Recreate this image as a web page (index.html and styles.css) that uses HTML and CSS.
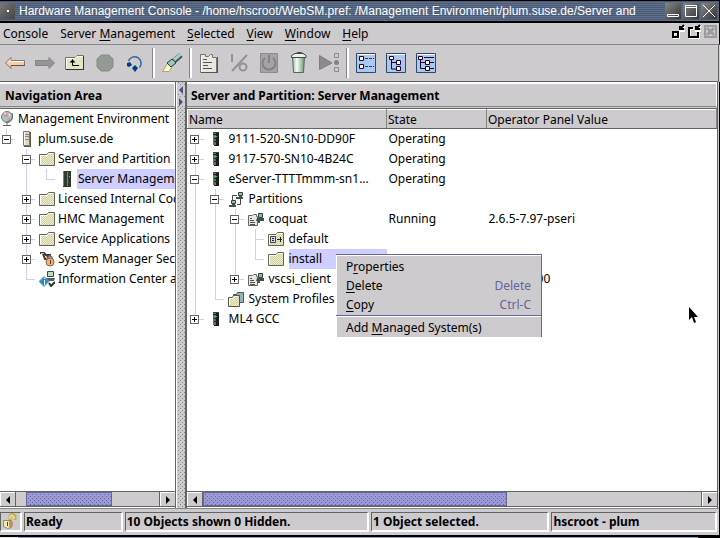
FILE: index.html
```html
<!DOCTYPE html>
<html lang="en">
<head>
<meta charset="utf-8">
<title>Hardware Management Console</title>
<link rel="stylesheet" href="styles.css">
</head>
<body>
<svg class="sprite" aria-hidden="true">
  <defs>
    <pattern id="dither" width="2" height="2" patternUnits="userSpaceOnUse"><path fill="#eeeecc" d="M0 0h2v2H0z"/><path fill="#cfcfa2" d="M0 0h1v1H0zM1 1h1v1H1z"/></pattern>
    <pattern id="bluedots" width="2" height="2" patternUnits="userSpaceOnUse"><path fill="#9ccaff" d="M0 0h2v2H0z"/><path fill="#b5c8e4" d="M0 0h1v1H0zM1 1h1v1H1z"/></pattern>
    <linearGradient id="can"><stop offset="0" stop-color="#9eb8a3"/><stop offset=".35" stop-color="#f2fff2"/><stop offset=".65" stop-color="#b6d0b8"/><stop offset="1" stop-color="#71927a"/></linearGradient>
  </defs>
  <symbol id="folder" viewBox="0 0 16 14">
    <path fill="url(#dither)" d="M1 3h7l2-2h5v12H1z"/>
    <path stroke="#63655a" d="M.5 13.500V2.500H8L9.500.5h6v13z"/>
    <path stroke="#fff" d="M1.500 12V3.500H8L10 1.500h4"/>
  </symbol>
  <symbol id="server" viewBox="0 0 8 14">
    <path fill="#3c403c" d="M1 0h6v13H1z"/><path fill="#686c68" d="M1 1h3v12H1z"/><path fill="#181c18" d="M4 1h3v12H4zM2 13h5v1H2z"/>
    <path stroke="#24ce52" d="M2 4.500h3"/><path stroke="#222" d="M1 2.500h6M2 6.500h5M2 9.500h5"/>
  </symbol>
  <symbol id="screen" viewBox="0 0 7 7">
    <path fill="#8fc3b6" stroke="#34443d" d="M2.500.5h4v3h-4z"/><path fill="#475248" d="M0 5h7v2H0zM3 4h3v1H3z"/>
  </symbol>
  <symbol id="partition" viewBox="0 0 16 13">
    <path fill="#e6e7e2" stroke="#656862" d="M.5 12.500V2.500h4l1-1h3v2h1v9z"/>
    <path stroke="#4e524d" d="M2 5.500h2M2 7.500h4M2 9.500h5M2 11.500h5"/><path fill="#415149" d="M9 5h7v3h-4v2h-2V8H8z"/>
    <path fill="#93b7b1" stroke="#34443d" d="M10.500.5h4v4h-4z"/>
  </symbol>
</svg>

<header class="titlebar">
  <button class="sysmenu" aria-label="Window menu"></button>
  <h1>Hardware Management Console - /home/hscroot/WebSM.pref: /Management Environment/plum.suse.de/Server and</h1>
  <div class="wincontrols">
    <button aria-label="Minimize"><svg viewBox="0 0 16 16"><path d="M2.500 11.500h11v2h-11z"/></svg></button>
    <button aria-label="Maximize"><svg viewBox="0 0 16 16"><path d="M2.500 2.500h11v11h-11zM2 4.500h11"/></svg></button>
    <button aria-label="Close"><svg viewBox="0 0 16 16"><path d="M2 2l12 12M14 2L2 14"/></svg></button>
  </div>
</header>

<nav class="menubar">
  <button>Co<u>n</u>sole</button>
  <button>Server <u>M</u>anagement</button>
  <button><u>S</u>elected</button>
  <button><u>V</u>iew</button>
  <button><u>W</u>indow</button>
  <button><u>H</u>elp</button>
  <div class="framecontrols">
    <button aria-label="Iconify"><svg viewBox="0 0 15 15"><path class="lo" d="M3 9h5v5H3zM14 2l-4 4M9 3v4h5"/><path class="hi" d="M2 8h5v5H2zM13 1L9 5M9 2v3h4"/></svg></button>
    <button aria-label="Restore"><svg viewBox="0 0 15 15"><path class="lo" d="M7 5H3v9h9v-5M14 2l-4 4M9 3v4h5"/><path class="hi" d="M6 4H2v9h9V8M13 1L9 5M9 2v3h4"/></svg></button>
    <button aria-label="Close view"><svg viewBox="0 0 15 15"><path fill="#cecbce" stroke="#9c9a9c" stroke-width="2" d="M2 2h11v11H2z"/><path stroke="#9c9a9c" stroke-width="3" d="M4 4l7 7M11 4l-7 7"/></svg></button>
  </div>
</nav>

<div class="toolbar" role="toolbar">
  <button aria-label="Back"><svg viewBox="0 0 30 30"><path fill="#f9cda9" stroke="#8f7464" d="M5.500 15L11 9.500v3h13.500v5H11v3z"/><path stroke="#fff" d="M11 13.500h13M8 14.500l3-3"/><path stroke="#5f5350" d="M11 17.500h14"/></svg></button>
  <button aria-label="Forward"><svg viewBox="0 0 30 30"><path fill="#949694" stroke="#848684" d="M24.500 15L19 9.500v3H5.500v5H19v3z"/></svg></button>
  <button aria-label="Up"><svg viewBox="0 0 30 30"><path fill="#e7e4c5" stroke="#74736a" d="M5.500 21.500v-12H15l2-2h6.500v14z"/><path stroke="#fff" d="M6.500 20V10.500H15l2-2h6"/><path stroke="#333" d="M6 21.500h18M23.500 8v13"/><path stroke="#000" d="M12.500 11.500v6H19"/><path fill="#000" d="M9.500 14.500l3-3 3 3z"/></svg></button>
  <button aria-label="Stop"><svg viewBox="0 0 30 30"><path fill="#949a94" stroke="#868b86" d="M11 7h8l4 4v8l-4 4h-8l-4-4v-8z"/></svg></button>
  <button aria-label="Reload"><svg viewBox="0 0 30 30"><path stroke="#31659c" stroke-width="1.500" d="M8.500 13a6.500 6.500 0 1 1 11 6.500"/><path fill="#003c84" d="M7 15l3-1 2 3-3 2-2-1zM15 17l3 3-3 4-3-4z"/></svg></button>
  <span class="sep"></span>
  <button aria-label="Highlight"><svg viewBox="0 0 30 30"><path fill="#fffbd0" stroke="#a8a56b" d="M5.500 23.500l5-8 4 4-2 4z"/><path stroke="#fff6a0" d="M8 22l4-5"/><path fill="#9fc3bd" stroke="#26383d" d="M10 15l5-4 4 4-5 4z"/><path stroke="#394d56" stroke-width="5" d="M17 13l7-6"/><path stroke="#a9cbd0" stroke-width="3" d="M17 12l7-6"/></svg></button>
  <span class="sep"></span>
  <button aria-label="Properties"><svg viewBox="0 0 30 30"><path fill="#e7e8e2" stroke="#74766f" d="M6.500 24.500v-18h5v2h3l2-2h2v3h4v15z"/><path stroke="#fff" d="M7.500 24V9"/><path stroke="#555" d="M23.500 9v16M7 24.500h17M9 11.500h4M9 14.500h9M9 17.500h5M9 20.500h9"/></svg></button>
  <button aria-label="Percent"><svg viewBox="0 0 30 30"><path stroke="#949294" stroke-width="2" d="M8 6v8M23 7L8 23"/><circle cx="19" cy="19" r="3.500" stroke="#949294" stroke-width="2"/></svg></button>
  <button aria-label="Power"><svg viewBox="0 0 30 30"><path fill="#a5a3a5" stroke="#8c8a8c" d="M6.500 5.500h17v19h-17z"/><path stroke="#848284" stroke-width="2" d="M11 10a6.500 6.500 0 1 0 8 0M15 7v8"/></svg></button>
  <button aria-label="Delete"><svg viewBox="0 0 30 30"><path fill="url(#can)" stroke="#52695a" d="M8.500 8.500h12l-1 16h-10z"/><path fill="#ebf5e7" stroke="#3b493f" d="M7.500 9.500v-2L11 5.500h8l3 2v2zM12 5.500l2-1h3l2 1"/></svg></button>
  <button aria-label="Run task"><svg viewBox="0 0 30 30"><path fill="#8c8a8c" stroke="#7f7d7f" d="M5.500 7.500v14L18 15z"/><path fill="#cecbce" stroke="#8c8a8c" d="M20.500 5.500h4v4h-4zM20.500 19.500h4v4h-4z"/><circle cx="22.500" cy="14.500" r="2.500" fill="#848284"/></svg></button>
  <span class="sep"></span>
  <button aria-label="Icon view"><svg viewBox="0 0 30 30"><path fill="url(#bluedots)" stroke="#294968" d="M5.500 5.500h19v19h-19z"/><path stroke="#fff" d="M6 6.500h18"/><path fill="#fff" stroke="#210031" d="M8.500 8.500h4v4h-4zM8.500 16.500h4v4h-4z"/><path stroke="#42306b" stroke-dasharray="3 1" d="M14 10.500h9M14 18.500h9"/></svg></button>
  <button aria-label="Tree view"><svg viewBox="0 0 30 30"><path fill="url(#bluedots)" stroke="#294968" d="M5.500 5.500h19v19h-19z"/><path stroke="#fff" d="M6 6.500h18"/><path stroke="#210031" d="M10.500 12v9H16M10 14.500h6"/><path fill="#fff" stroke="#210031" d="M8.500 8.500h4v3h-4zM15.500 12.500h4v4h-4zM15.500 18.500h4v4h-4z"/></svg></button>
  <button aria-label="Tree details view"><svg viewBox="0 0 30 30"><path fill="url(#bluedots)" stroke="#294968" d="M5.500 5.500h19v19h-19z"/><path stroke="#fff" d="M6 6.500h18"/><path stroke="#210031" d="M9.500 12v8.500H23M10 14.500h13M13 9.500h10"/><path fill="#fff" stroke="#210031" d="M7.500 8.500h4v3h-4zM14.500 12.500h4v4h-4zM14.500 18.500h4v4h-4z"/></svg></button>
</div>

<main class="workspace">
  <section class="pane navpane">
    <h2>Navigation Area</h2>
    <div class="view">
      <ul class="tree">
        <li><span class="icon"><svg width="14" height="16" viewBox="0 0 14 16"><circle cx="7" cy="6" r="5.500" fill="#a9c6d6" stroke="#767c7c"/><path fill="#d89c89" d="M3 3l4-1 2 2-3 3-2-1zM7 8l3-2v4l-2 1z"/><path stroke="#fff" d="M4 2l2 1M9 3l1 2"/><path stroke="#666" d="M12 2c2 5-2 9-6 9M7 12v2M3 14.500h8"/></svg></span><span class="label">Management Environment</span></li>
        <li><i class="g end"><button class="box" aria-label="Collapse"></button></i><span class="icon"><svg width="8" height="16" viewBox="0 0 8 16"><path fill="#ddd9bf" stroke="#7a7869" d="M.5.5h6v14h-6z"/><path stroke="#57554b" d="M7.500 1v15M1 15.500h7"/><path stroke="#8d8a77" d="M2 3.500h4M2 5.500h4M2 8.500h4"/><path stroke="#fff" d="M1.500 1v13"/></svg></span><span class="label">plum.suse.de</span></li>
        <li><i class="g"></i><i class="g tee"><button class="box" aria-label="Collapse"></button></i><span class="icon"><svg class="fold"><use href="#folder"/></svg></span><span class="label">Server and Partition</span></li>
        <li><i class="g"></i><i class="g bar"></i><i class="g end"></i><span class="icon"><svg width="8" height="16" viewBox="0 0 8 16"><path fill="#313831" d="M0 0h8v16H0z"/><path stroke="#7b857b" d="M.5 0v15"/><path stroke="#b57820" d="M4.500 1v14"/><path stroke="#20e080" d="M6 5.500h1"/></svg></span><span class="label selected">Server Management</span></li>
        <li><i class="g"></i><i class="g tee"><button class="box plus" aria-label="Expand"></button></i><span class="icon"><svg class="fold"><use href="#folder"/></svg></span><span class="label">Licensed Internal Code</span></li>
        <li><i class="g"></i><i class="g tee"><button class="box plus" aria-label="Expand"></button></i><span class="icon"><svg class="fold"><use href="#folder"/></svg></span><span class="label">HMC Management</span></li>
        <li><i class="g"></i><i class="g tee"><button class="box plus" aria-label="Expand"></button></i><span class="icon"><svg class="fold"><use href="#folder"/></svg></span><span class="label">Service Applications</span></li>
        <li><i class="g"></i><i class="g tee"><button class="box plus" aria-label="Expand"></button></i><span class="icon"><svg width="16" height="16" viewBox="0 0 16 16"><path stroke="#433b37" stroke-width="2" d="M1 2h4l2 2h5M4 3l2 5h2M8 4l1 3"/><path stroke="#d7af85" d="M2 2.500h3M7 5l1 3"/><path stroke="#777" stroke-width="2" d="M9 9V7c1-3 4-2 4 1"/><circle cx="11" cy="11" r="4" fill="#efb277" stroke="#916044"/><path stroke="#553b42" d="M11.500 9v4"/></svg></span><span class="label">System Manager Security</span></li>
        <li><i class="g"></i><i class="g end"></i><span class="icon"><svg width="16" height="16" viewBox="0 0 16 16"><path fill="#b9dcc7" stroke="#394948" d="M8.500.5h6v5h-6z"/><path fill="#566158" d="M7 7h9l-1 3H7z"/><path fill="#2688b6" stroke="#64b5d4" d="M5 5.500l5 5-5 5-5-5z"/><path stroke="#fff" d="M5.500 7v1M5.500 9v5"/><path stroke="#26352e" stroke-width="2" d="M10 12l2 3 4-4"/></svg></span><span class="label">Information Center and Setup</span></li>
      </ul>
      <div class="scrollbar nav">
        <button class="arrow left" aria-label="Scroll left"></button>
        <div class="track"><div class="thumb"></div></div>
        <button class="arrow right" aria-label="Scroll right"></button>
      </div>
    </div>
  </section>

  <div class="splitter"><button class="arrow left" aria-label="Collapse left"></button><button class="arrow right" aria-label="Expand right"></button></div>

  <section class="pane content">
    <h2>Server and Partition: Server Management</h2>
    <div class="view">
      <div class="tablewrap">
      <table>
        <colgroup><col class="name"><col class="state"><col></colgroup>
        <thead><tr><th>Name</th><th>State</th><th>Operator Panel Value</th></tr></thead>
        <tbody>
          <tr><td><div class="node"><i class="g first"><button class="box plus" aria-label="Expand"></button></i><span class="icon"><svg class="srv"><use href="#server"/></svg></span><span>9111-520-SN10-DD90F</span></div></td><td>Operating</td><td></td></tr>
          <tr><td><div class="node"><i class="g tee"><button class="box plus" aria-label="Expand"></button></i><span class="icon"><svg class="srv"><use href="#server"/></svg></span><span>9117-570-SN10-4B24C</span></div></td><td>Operating</td><td></td></tr>
          <tr><td><div class="node"><i class="g tee"><button class="box" aria-label="Collapse"></button></i><span class="icon"><svg class="srv"><use href="#server"/></svg></span><span>eServer-TTTTmmm-sn1...</span></div></td><td>Operating</td><td></td></tr>
          <tr><td><div class="node"><i class="g bar"></i><i class="g tee"><button class="box" aria-label="Collapse"></button></i><span class="icon"><svg width="15" height="15" viewBox="0 0 15 15"><path stroke="#454945" d="M3.500 8V3.500H8M8 12.500h3.500V7"/><use href="#screen" x="7" width="7" height="7"/><use href="#screen" y="8" width="7" height="7"/></svg></span><span>Partitions</span></div></td><td></td><td></td></tr>
          <tr><td><div class="node"><i class="g bar"></i><i class="g bar"></i><i class="g tee"><button class="box" aria-label="Collapse"></button></i><span class="icon"><svg class="part"><use href="#partition"/></svg></span><span>coquat</span></div></td><td>Running</td><td>2.6.5-7.97-pseri</td></tr>
          <tr><td><div class="node"><i class="g bar"></i><i class="g bar"></i><i class="g bar"></i><i class="g tee"></i><span class="icon"><svg class="fold" viewBox="0 0 16 14"><use href="#folder"/><path fill="#d8d6ee" stroke="#454545" d="M2.500 4.500h5v6h-5z"/><path stroke="#222" d="M4 6.500h2M4 8.500h2M9 7.500h5M12.500 5v5"/></svg></span><span>default</span></div></td><td></td><td></td></tr>
          <tr><td><div class="node"><i class="g bar"></i><i class="g bar"></i><i class="g bar"></i><i class="g end"></i><span class="icon"><svg class="fold"><use href="#folder"/></svg></span><span class="picked">install</span></div></td><td></td><td></td></tr>
          <tr><td><div class="node"><i class="g bar"></i><i class="g bar"></i><i class="g end"><button class="box plus" aria-label="Expand"></button></i><span class="icon"><svg class="part"><use href="#partition"/></svg></span><span>vscsi_client</span></div></td><td></td><td>000000000</td></tr>
          <tr><td><div class="node"><i class="g bar"></i><i class="g end"></i><span class="icon"><svg width="16" height="15" viewBox="0 0 16 15"><path fill="#91b3b3" stroke="#465a5a" d="M5.500 10.500v-8h3l1-2h6v10z"/><path fill="url(#dither)" stroke="#555447" d="M.5 14.500v-9h4l1-2h6v11z"/><path stroke="#fff" d="M1.500 13V6.500H5l1-2h4"/></svg></span><span>System Profiles</span></div></td><td></td><td></td></tr>
          <tr><td><div class="node"><i class="g end"><button class="box plus" aria-label="Expand"></button></i><span class="icon"><svg class="srv"><use href="#server"/></svg></span><span>ML4 GCC</span></div></td><td></td><td></td></tr>
        </tbody>
      </table>
      </div>
      <div class="scrollbar main">
        <button class="arrow left" aria-label="Scroll left"></button>
        <div class="track"><div class="thumb"></div></div>
        <button class="arrow right" aria-label="Scroll right"></button>
      </div>
    </div>
  </section>
</main>

<footer class="statusbar">
  <div class="cell lock"><svg width="16" height="16" viewBox="0 0 16 16"><path stroke="#c7ae3c" stroke-width="3" d="M8 7V3c1-2 5-2 5 1v3"/><path stroke="#fff8bd" d="M8 6V3c1-1 4-1 4 1v2"/><path fill="#f7e8b7" stroke="#a18945" d="M1.500 7.500h8l1 3-1 4-4 1-4-2z"/><path fill="#c98a72" d="M7 8h3v6H7z"/><path stroke="#494238" d="M5.500 9v4"/></svg></div>
  <div class="cell">Ready</div>
  <div class="cell">10 Objects shown 0 Hidden.</div>
  <div class="cell">1 Object selected.</div>
  <div class="cell">hscroot - plum</div>
</footer>
<div class="desktop"></div>

<div class="popup" role="menu">
  <button role="menuitem"><span>P<u>r</u>operties</span></button>
  <button role="menuitem"><span><u>D</u>elete</span><kbd>Delete</kbd></button>
  <button role="menuitem"><span><u>C</u>opy</span><kbd>Ctrl-C</kbd></button>
  <hr>
  <button role="menuitem"><span>Add <u>M</u>anaged System(s)</span></button>
</div>

<svg class="pointer" viewBox="0 0 10 17" aria-hidden="true"><path fill="#000" d="M1 0v13l3-3 2 6 2-1-2-5h4z"/></svg>
</body>
</html>
```
FILE: styles.css
```css
:root {
  --face: #cecbce;
  --shade: #636563;
  --line: #ceceff;
  --accent: #63659c;
}

* { box-sizing: border-box; }

body {
  margin: 0;
  height: 100vh;
  display: flex;
  flex-direction: column;
  overflow: hidden;
  background: var(--face);
  color: #000;
  font: 12px/20px "Noto Sans", "Open Sans", sans-serif;
}

button {
  margin: 0;
  padding: 0;
  border: 0;
  background: none;
  color: inherit;
  font: inherit;
}

svg { fill: none; }
u { text-underline-offset: 2px; }
.sprite { position: absolute; width: 0; height: 0; }
h1, h2 { margin: 0; white-space: nowrap; overflow: hidden; }

/* Title bar */
.titlebar {
  flex: none;
  display: flex;
  align-items: center;
  height: 23px;
  border: solid #000;
  border-width: 1px 1px 2px 0;
  background: repeating-linear-gradient(#4a5a73 0 1px, #5e708c 1px 2px);
  color: #fff;
}
.titlebar h1 { flex: 1; min-width: 0; padding-left: 4px; font: 12px/18px "Liberation Sans", Arial, sans-serif; }
.sysmenu { flex: none; width: 15px; height: 16px; background: linear-gradient(135deg, #777, #444); }
.sysmenu::after { content: ""; display: block; width: 2px; height: 2px; margin: auto; background: #fff; }
.wincontrols { flex: none; display: flex; gap: 2px; padding-right: 2px; }
.wincontrols button { width: 16px; height: 16px; background: linear-gradient(135deg, #888, #333); }
.wincontrols svg { display: block; width: 16px; height: 16px; stroke: #fff; }

/* Menu bar */
.menubar {
  flex: none;
  display: flex;
  gap: 12px;
  height: 22px;
  padding: 0 1px 0 3px;
  border-right: 1px solid #000;
  border-bottom: 1px solid #848684;
}
.framecontrols { display: flex; gap: 1px; margin-left: auto; }
.framecontrols button { height: 17px; }
.framecontrols svg { display: block; width: 15px; height: 15px; stroke-width: 2; }
.lo { stroke: #fff; }
.hi { stroke: #000; }

/* Tool bar */
.toolbar {
  flex: none;
  display: flex;
  align-items: center;
  height: 37px;
  margin-right: 1px;
  border: solid var(--shade);
  border-width: 0 1px 1px 0;
}
.toolbar button { width: 30px; height: 32px; }
.toolbar svg { display: block; width: 30px; height: 30px; }
.sep { width: 3px; height: 30px; margin: 0 2px; border-left: 1px solid #848684; border-right: 2px solid #fff; }

/* Panes */
.workspace { flex: 1; min-height: 0; display: flex; border-right: 1px solid #000; }
.pane { display: flex; flex-direction: column; min-width: 0; }
.navpane { flex: 0 0 176px; border-right: 1px solid var(--shade); }
.content { flex: 1; margin-right: 1px; border: solid var(--shade); border-width: 0 1px 0 2px; }
.pane h2 {
  height: 25px;
  padding-left: 5px;
  border: solid #fff;
  border-width: 2px 1px 0 0;
  border-bottom: 1px solid #848684;
  font-size: 12px;
  line-height: 23px;
}
.content h2 { padding-left: 4px; }
.view {
  flex: 1;
  min-height: 0;
  display: flex;
  flex-direction: column;
  margin-top: 1px;
  border-top: 1px solid var(--shade);
  border-bottom: 1px solid #fff;
  background: #fff;
}
.splitter {
  flex: 0 0 9px;
  display: flex;
  flex-direction: column;
  gap: 4px;
  padding-top: 4px;
  border-left: 1px solid #fff;
  background:
    conic-gradient(at 1px 1px, transparent 75%, #848684 0) 1px 0 / 4px 4px,
    conic-gradient(at 1px 1px, transparent 75%, #848684 0) 3px 2px / 4px 4px,
    var(--face);
}
.splitter .arrow { height: 8px; background: var(--face); color: #4a4d84; }

/* Trees */
.tree { flex: 1; margin: 0 0 0 -4px; padding: 0; list-style: none; overflow: hidden; }
.tree li, .node { display: flex; height: 20px; white-space: nowrap; }
.icon { flex: none; display: flex; align-items: center; justify-content: center; width: 21px; }
.label { flex: 1; padding: 0 1px; }
.selected, .picked { background: var(--line); }
.picked { flex: 1; }
.fold { width: 16px; height: 14px; }
.srv { width: 8px; height: 14px; }
.part { width: 16px; height: 13px; }

.g { position: relative; flex: none; display: grid; place-items: center; width: 20px; }
.g::before, .g::after { content: ""; position: absolute; left: 10px; background: var(--line); }
.bar::before, .tee::before { top: 0; bottom: 0; width: 1px; }
.end::before { top: 0; height: 11px; width: 1px; }
.first::before { top: 10px; bottom: 0; width: 1px; }
.tee::after, .end::after, .first::after { top: 10px; width: 9px; height: 1px; }
.box {
  position: relative;
  z-index: 1;
  width: 9px;
  height: 9px;
  border: 1px solid #636563;
  background: linear-gradient(#000, #000) center / 5px 1px no-repeat, #fff;
}
.plus { background: linear-gradient(#000, #000) center / 5px 1px no-repeat, linear-gradient(#000, #000) center / 1px 5px no-repeat, #fff; }

/* Table */
.tablewrap { flex: 1; min-height: 0; overflow: hidden; }
table { width: 100%; table-layout: fixed; border-collapse: collapse; }
.name { width: 199px; }
.state { width: 100px; }
th {
  height: 19px;
  padding: 0 0 0 1px;
  border: solid;
  border-width: 1px;
  border-color: #fff #848684 #636563 #fff;
  background: var(--face);
  font-weight: normal;
  line-height: 17px;
  text-align: left;
}
td { height: 20px; padding: 0 0 0 2px; white-space: nowrap; }
td:first-child { padding: 0; }
.node { margin-left: -3px; }
.node .icon { width: 24px; padding-right: 1px; }

/* Scroll bars */
.scrollbar { flex: none; display: flex; height: 16px; border: solid var(--shade); border-width: 1px 0; background: var(--face); }
.scrollbar .arrow { width: 15px; border: solid #fff; border-width: 1px 0 0 1px; }
.arrow { display: grid; place-items: center; }
.arrow::before { content: ""; border: solid transparent; border-width: 4px 0; }
.arrow.left::before { border-right: 4px solid; }
.arrow.right::before { border-left: 4px solid; }
.track { flex: 1; border: solid var(--shade); border-width: 0 1px; }
.thumb {
  height: 100%;
  border: 1px solid var(--accent);
  background:
    conic-gradient(at 1px 1px, transparent 75%, #63659c 0) 1px 1px / 4px 4px,
    conic-gradient(at 1px 1px, transparent 75%, #63659c 0) 3px 3px / 4px 4px,
    #9c9ad6;
}
.nav .thumb { width: 60%; margin-left: 7%; }
.main .thumb { width: 61%; }

/* Status bar */
.statusbar {
  flex: none;
  display: grid;
  grid-template-columns: 22px 99fr 245fr 179fr 166fr;
  gap: 2px;
  height: 27px;
  padding: 4px 2px 3px 0;
  border: solid #000;
  border-width: 0 1px 0 0;
  box-shadow: inset 0 1px #848684;
  font-weight: bold;
  line-height: 18px;
}
.cell { padding-left: 1px; border: solid; border-width: 1px 2px 2px 1px; border-color: #636563 #fff #fff #636563; white-space: nowrap; overflow: hidden; }
.lock svg { display: block; }
.desktop { flex: none; height: 3px; border-top: 2px solid #000; background: linear-gradient(90deg, #eee 18px, #8c9ab5 18px 97%, #000 97%); }

/* Context menu */
.popup {
  position: absolute;
  left: 336px;
  top: 254px;
  width: 206px;
  height: 83px;
  padding: 2px 0;
  overflow: hidden;
  border: 1px solid var(--accent);
  border-width: 1px 1px 0 0;
  box-shadow: inset 1px 1px #fff;
  background: var(--face);
}
.popup button { display: flex; justify-content: space-between; width: 100%; height: 19px; padding: 0 10px; line-height: 19px; }
.popup kbd { color: var(--accent); font: inherit; }
.popup hr { height: 2px; margin: 1px 0; border: 0; background: linear-gradient(var(--accent) 1px, #fff 1px); }

.pointer { position: absolute; left: 688px; top: 307px; width: 10px; height: 17px; }
```
